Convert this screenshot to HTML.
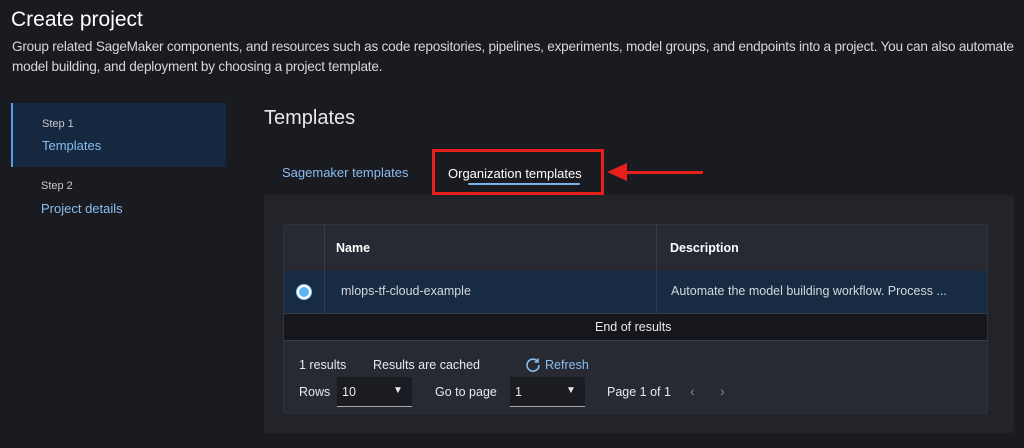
<!DOCTYPE html>
<html><head><style>
*{margin:0;padding:0;box-sizing:border-box}
body{width:1024px;height:448px;background:#1a1b20;font-family:"Liberation Sans",sans-serif;color:#d1d5db;position:relative;overflow:hidden}
.a{position:absolute;white-space:nowrap}
</style></head><body>
<div class="a" style="left:11px;top:8px;font-size:21px;color:#fff">Create project</div>
<div class="a" style="left:12px;top:37px;font-size:13.6px;line-height:20px;color:#d5d7dc;letter-spacing:-0.22px">Group related SageMaker components, and resources such as code repositories, pipelines, experiments, model groups, and endpoints into a project. You can also automate<br>model building, and deployment by choosing a project template.</div>

<div class="a" style="left:11px;top:103px;width:215px;height:64px;background:#16283f;border-left:2px solid #539fe5"></div>
<div class="a" style="left:42px;top:118px;font-size:11px;color:#c6c8cd">Step 1</div>
<div class="a" style="left:42px;top:138px;font-size:13px;color:#89bdee">Templates</div>
<div class="a" style="left:41px;top:180px;font-size:11px;color:#c6c8cd">Step 2</div>
<div class="a" style="left:41px;top:201px;font-size:13px;color:#89bdee">Project details</div>

<div class="a" style="left:264px;top:107px;font-size:20px;color:#e8e9ec">Templates</div>
<div class="a" style="left:282px;top:165px;font-size:13px;color:#89bdee">Sagemaker templates</div>
<div class="a" style="left:448px;top:166px;font-size:13px;color:#fff">Organization templates</div>
<div class="a" style="left:468px;top:183px;width:112px;height:2px;background:#7cb4ea;border-radius:1px"></div>
<div class="a" style="left:432px;top:149px;width:172px;height:46px;border:3px solid #e8201c"></div>
<div class="a" style="left:625px;top:171px;width:78px;height:3px;background:#e8201c"></div>
<div class="a" style="left:607px;top:163px;width:0;height:0;border-top:9px solid transparent;border-bottom:9px solid transparent;border-right:20px solid #e8201c"></div>

<div class="a" style="left:264px;top:195px;width:750px;height:238px;background:#232429;border-radius:3px"></div>
<div class="a" style="left:283px;top:224px;width:705px;height:190px;background:#282a33;border:1px solid #31333b;border-radius:3px;overflow:hidden">
  <div class="a" style="left:40px;top:0;width:1px;height:87px;background:#3a3c45"></div>
  <div class="a" style="left:372px;top:0;width:1px;height:87px;background:#3a3c45"></div>
  <div class="a" style="left:52px;top:16px;font-size:12.5px;font-weight:bold;color:#fff">Name</div>
  <div class="a" style="left:386px;top:16px;font-size:12.5px;font-weight:bold;color:#fff">Description</div>
  <div class="a" style="left:0;top:46px;width:705px;height:42px;background:#172b43"></div>
  <div class="a" style="left:40px;top:46px;width:1px;height:42px;background:#2b3d55"></div>
  <div class="a" style="left:372px;top:46px;width:1px;height:42px;background:#2b3d55"></div>
  <div class="a" style="left:12px;top:59px;width:16px;height:16px;border-radius:50%;background:#fff;border:1px solid #8cc8fb"><div style="margin:2px;width:10px;height:10px;border-radius:50%;background:#5ab6f5"></div></div>
  <div class="a" style="left:57px;top:59px;font-size:12.5px;color:#d5d7dc">mlops-tf-cloud-example</div>
  <div class="a" style="left:387px;top:59px;font-size:12.5px;color:#d5d7dc">Automate the model building workflow. Process ...</div>
  <div class="a" style="left:0;top:88px;width:705px;height:28px;background:#16171c;border-top:1px solid #3a3c45;border-bottom:1px solid #3a3c45"></div>
  <div class="a" style="left:311px;top:95px;font-size:12.5px;color:#e8e9ec">End of results</div>
  <div class="a" style="left:15px;top:133px;font-size:12.5px;color:#e8e9ec">1 results</div>
  <div class="a" style="left:89px;top:133px;font-size:12.5px;color:#e8e9ec">Results are cached</div>
  <svg class="a" style="left:241px;top:132px" width="16" height="16" viewBox="0 0 16 16"><path d="M12.5 4.2A6 6 0 1 0 14 8" fill="none" stroke="#89bdee" stroke-width="1.6"/><path d="M13 1.5v3.5h-3.5" fill="none" stroke="#89bdee" stroke-width="1.6"/></svg>
  <div class="a" style="left:261px;top:133px;font-size:12.5px;color:#89bdee">Refresh</div>
  <div class="a" style="left:15px;top:160px;font-size:12.5px;color:#e8e9ec">Rows</div>
  <div class="a" style="left:53px;top:152px;width:75px;height:30px;background:#1b1c21;border-bottom:1px solid #aaa"></div>
  <div class="a" style="left:58px;top:160px;font-size:12.5px;color:#e8e9ec">10</div>
  <div class="a" style="left:109px;top:160px;font-size:10px;color:#e8e9ec">▼</div>
  <div class="a" style="left:151px;top:160px;font-size:12.5px;color:#e8e9ec">Go to page</div>
  <div class="a" style="left:226px;top:152px;width:75px;height:30px;background:#1b1c21;border-bottom:1px solid #aaa"></div>
  <div class="a" style="left:231px;top:160px;font-size:12.5px;color:#e8e9ec">1</div>
  <div class="a" style="left:282px;top:160px;font-size:10px;color:#e8e9ec">▼</div>
  <div class="a" style="left:323px;top:160px;font-size:12.5px;color:#e8e9ec">Page 1 of 1</div>
  <div class="a" style="left:406px;top:158px;font-size:14px;color:#888">‹</div>
  <div class="a" style="left:436px;top:158px;font-size:14px;color:#888">›</div>
</div>
</body></html>
